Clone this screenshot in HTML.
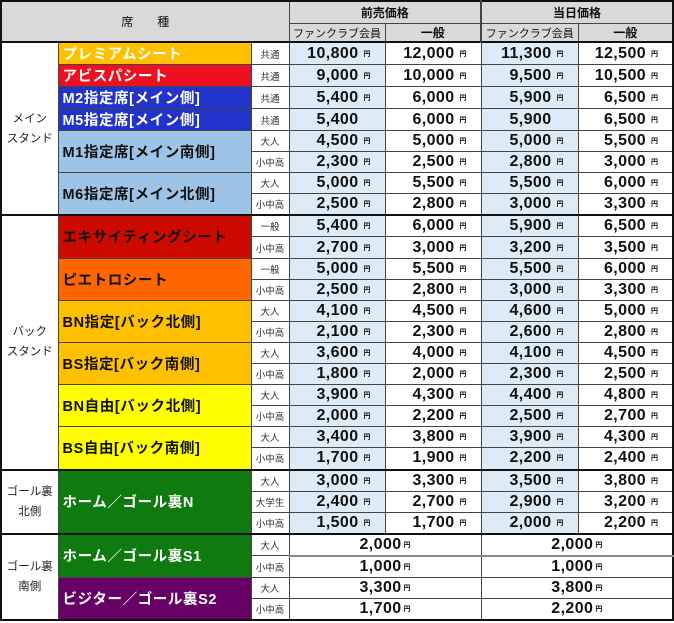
<!DOCTYPE html>
<html><head><meta charset="utf-8"><style>
body{margin:0;background:#fff;width:674px;height:623px;overflow:hidden;font-family:"Liberation Sans","Noto Sans CJK JP",sans-serif}
table{position:absolute;left:0;top:0;border-collapse:collapse;table-layout:fixed;width:673px;border:2px solid #111}
td{padding:0;border:1px solid #444;overflow:hidden;white-space:nowrap;color:#111}
tr.h1 td{height:21px}
tr.h2 td{height:17px}
tr.r td{height:20.1px}
.hd{background:#d9d9d9;text-align:center;font-size:12px}
.hb{font-weight:bold;font-size:12px}
.ar{text-align:center;font-size:11.5px;line-height:20px;color:#222;background:#fff}
.nm{font-weight:bold;font-size:14.5px;letter-spacing:0.6px;padding-left:4px;color:#fff}
.nk{color:#111}
.ty{text-align:center;font-size:9.5px;color:#333;background:#fff}
.p{text-align:right;font-weight:bold;font-size:16px;letter-spacing:0.4px;padding-right:14px;background:#fff}
.f{background:#ddebf7}
.p i{font-style:normal;font-size:7px;font-weight:bold;margin-left:5px;letter-spacing:0;vertical-align:2px}
.c{text-align:center;padding-right:0;padding-left:0}
.c i{margin-left:2px}
.dt td.ty,.dt td.p{border-bottom:1px dotted #333}
.tk td{border-top:2px solid #111}
.hid{visibility:hidden}
</style></head><body>
<table>
<colgroup><col style="width:57px"><col style="width:193px"><col style="width:38px"><col style="width:96px"><col style="width:96px"><col style="width:97px"><col style="width:95px"></colgroup>
<tr class="h1"><td class="hd" colspan="3" rowspan="2">席　　種</td><td class="hd hb" colspan="2">前売価格</td><td class="hd hb" colspan="2" style="border-left:2px solid #444">当日価格</td></tr>
<tr class="h2"><td class="hd" style="font-size:11px">ファンクラブ会員</td><td class="hd hb">一般</td><td class="hd" style="font-size:11px;border-left:2px solid #444">ファンクラブ会員</td><td class="hd hb">一般</td></tr>

<tr class="r tk"><td class="ar" rowspan="8">メイン<br>スタンド</td><td class="nm" style="background:#ffc000">プレミアムシート</td><td class="ty">共通</td><td class="p f">10,800<i>円</i></td><td class="p">12,000<i>円</i></td><td class="p f">11,300<i>円</i></td><td class="p">12,500<i>円</i></td></tr>
<tr class="r"><td class="nm" style="background:#ec1020">アビスパシート</td><td class="ty">共通</td><td class="p f">9,000<i>円</i></td><td class="p">10,000<i>円</i></td><td class="p f">9,500<i>円</i></td><td class="p">10,500<i>円</i></td></tr>
<tr class="r"><td class="nm" style="background:#2233cc">M2指定席[メイン側]</td><td class="ty">共通</td><td class="p f">5,400<i>円</i></td><td class="p">6,000<i>円</i></td><td class="p f">5,900<i>円</i></td><td class="p">6,500<i>円</i></td></tr>
<tr class="r"><td class="nm" style="background:#2233cc">M5指定席[メイン側]</td><td class="ty">共通</td><td class="p f">5,400<i class="hid">円</i></td><td class="p">6,000<i>円</i></td><td class="p f">5,900<i class="hid">円</i></td><td class="p">6,500<i>円</i></td></tr>
<tr class="r dt"><td class="nm nk" rowspan="2" style="background:#9dc3e6">M1指定席[メイン南側]</td><td class="ty">大人</td><td class="p f">4,500<i>円</i></td><td class="p">5,000<i>円</i></td><td class="p f">5,000<i>円</i></td><td class="p">5,500<i>円</i></td></tr>
<tr class="r"><td class="ty">小中高</td><td class="p f">2,300<i>円</i></td><td class="p">2,500<i>円</i></td><td class="p f">2,800<i>円</i></td><td class="p">3,000<i>円</i></td></tr>
<tr class="r dt"><td class="nm nk" rowspan="2" style="background:#9dc3e6">M6指定席[メイン北側]</td><td class="ty">大人</td><td class="p f">5,000<i>円</i></td><td class="p">5,500<i>円</i></td><td class="p f">5,500<i>円</i></td><td class="p">6,000<i>円</i></td></tr>
<tr class="r"><td class="ty">小中高</td><td class="p f">2,500<i>円</i></td><td class="p">2,800<i>円</i></td><td class="p f">3,000<i>円</i></td><td class="p">3,300<i>円</i></td></tr>

<tr class="r dt tk"><td class="ar" rowspan="12">バック<br>スタンド</td><td class="nm nk" rowspan="2" style="background:#cc0a00">エキサイティングシート</td><td class="ty">一般</td><td class="p f">5,400<i>円</i></td><td class="p">6,000<i>円</i></td><td class="p f">5,900<i>円</i></td><td class="p">6,500<i>円</i></td></tr>
<tr class="r"><td class="ty">小中高</td><td class="p f">2,700<i>円</i></td><td class="p">3,000<i>円</i></td><td class="p f">3,200<i>円</i></td><td class="p">3,500<i>円</i></td></tr>
<tr class="r dt"><td class="nm nk" rowspan="2" style="background:#ff6600">ピエトロシート</td><td class="ty">一般</td><td class="p f">5,000<i>円</i></td><td class="p">5,500<i>円</i></td><td class="p f">5,500<i>円</i></td><td class="p">6,000<i>円</i></td></tr>
<tr class="r"><td class="ty">小中高</td><td class="p f">2,500<i>円</i></td><td class="p">2,800<i>円</i></td><td class="p f">3,000<i>円</i></td><td class="p">3,300<i>円</i></td></tr>
<tr class="r dt"><td class="nm nk" rowspan="2" style="background:#ffc000">BN指定[バック北側]</td><td class="ty">大人</td><td class="p f">4,100<i>円</i></td><td class="p">4,500<i>円</i></td><td class="p f">4,600<i>円</i></td><td class="p">5,000<i>円</i></td></tr>
<tr class="r"><td class="ty">小中高</td><td class="p f">2,100<i>円</i></td><td class="p">2,300<i>円</i></td><td class="p f">2,600<i>円</i></td><td class="p">2,800<i>円</i></td></tr>
<tr class="r dt"><td class="nm nk" rowspan="2" style="background:#ffc000">BS指定[バック南側]</td><td class="ty">大人</td><td class="p f">3,600<i>円</i></td><td class="p">4,000<i>円</i></td><td class="p f">4,100<i>円</i></td><td class="p">4,500<i>円</i></td></tr>
<tr class="r"><td class="ty">小中高</td><td class="p f">1,800<i>円</i></td><td class="p">2,000<i>円</i></td><td class="p f">2,300<i>円</i></td><td class="p">2,500<i>円</i></td></tr>
<tr class="r dt"><td class="nm nk" rowspan="2" style="background:#ffff00">BN自由[バック北側]</td><td class="ty">大人</td><td class="p f">3,900<i>円</i></td><td class="p">4,300<i>円</i></td><td class="p f">4,400<i>円</i></td><td class="p">4,800<i>円</i></td></tr>
<tr class="r"><td class="ty">小中高</td><td class="p f">2,000<i>円</i></td><td class="p">2,200<i>円</i></td><td class="p f">2,500<i>円</i></td><td class="p">2,700<i>円</i></td></tr>
<tr class="r dt"><td class="nm nk" rowspan="2" style="background:#ffff00">BS自由[バック南側]</td><td class="ty">大人</td><td class="p f">3,400<i>円</i></td><td class="p">3,800<i>円</i></td><td class="p f">3,900<i>円</i></td><td class="p">4,300<i>円</i></td></tr>
<tr class="r"><td class="ty">小中高</td><td class="p f">1,700<i>円</i></td><td class="p">1,900<i>円</i></td><td class="p f">2,200<i>円</i></td><td class="p">2,400<i>円</i></td></tr>

<tr class="r dt tk"><td class="ar" rowspan="3">ゴール裏<br>北側</td><td class="nm" rowspan="3" style="background:#0f7a0f">ホーム／ゴール裏N</td><td class="ty">大人</td><td class="p f">3,000<i>円</i></td><td class="p">3,300<i>円</i></td><td class="p f">3,500<i>円</i></td><td class="p">3,800<i>円</i></td></tr>
<tr class="r dt"><td class="ty">大学生</td><td class="p f">2,400<i>円</i></td><td class="p">2,700<i>円</i></td><td class="p f">2,900<i>円</i></td><td class="p">3,200<i>円</i></td></tr>
<tr class="r"><td class="ty">小中高</td><td class="p f">1,500<i>円</i></td><td class="p">1,700<i>円</i></td><td class="p f">2,000<i>円</i></td><td class="p">2,200<i>円</i></td></tr>

<tr class="r tk"><td class="ar" rowspan="4">ゴール裏<br>南側</td><td class="nm" rowspan="2" style="background:#0f7a0f">ホーム／ゴール裏S1</td><td class="ty" style="border-bottom:1px dotted #333">大人</td><td class="p c" colspan="2">2,000<i>円</i></td><td class="p c" colspan="2">2,000<i>円</i></td></tr>
<tr class="r"><td class="ty">小中高</td><td class="p c" colspan="2" style="border-top:2px solid #888">1,000<i>円</i></td><td class="p c" colspan="2" style="border-top:2px solid #888">1,000<i>円</i></td></tr>
<tr class="r dt"><td class="nm" rowspan="2" style="background:#660066">ビジター／ゴール裏S2</td><td class="ty">大人</td><td class="p c" colspan="2">3,300<i>円</i></td><td class="p c" colspan="2">3,800<i>円</i></td></tr>
<tr class="r"><td class="ty">小中高</td><td class="p c" colspan="2">1,700<i>円</i></td><td class="p c" colspan="2">2,200<i>円</i></td></tr>
</table>
</body></html>
